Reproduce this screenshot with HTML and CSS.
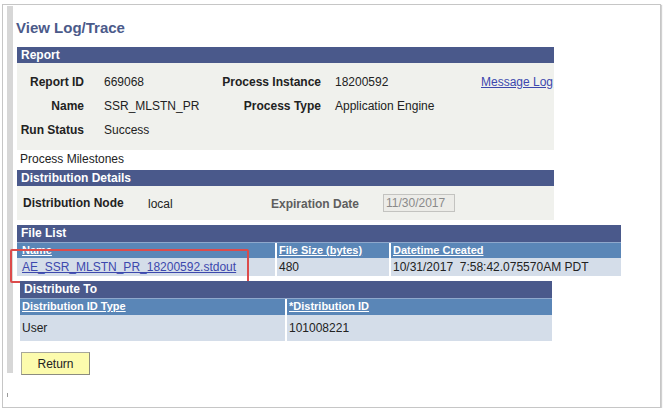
FILE: index.html
```html
<!DOCTYPE html>
<html>
<head>
<meta charset="utf-8">
<link rel="stylesheet" href="styles.css">
</head>
<body>
<div class="frame">
  <div class="rail">
    <div class="rail-bar"></div>
    <div class="rail-tick"></div>
  </div>
  <main class="page">
    <h1 class="title">View Log/Trace</h1>

    <section class="box report">
      <div class="bar">Report</div>
      <div class="report-body">
        <span class="lbl">Report ID</span><span class="val">669068</span>
        <span class="lbl">Process Instance</span><span class="val2">18200592</span>
        <a class="link msg" href="#">Message Log</a>

        <span class="lbl">Name</span><span class="val">SSR_MLSTN_PR</span>
        <span class="lbl">Process Type</span><span class="val2">Application Engine</span>
        <span></span>

        <span class="lbl">Run Status</span><span class="val">Success</span>
        <span></span><span></span><span></span>
      </div>
    </section>

    <div class="milestones">Process Milestones</div>

    <section class="box dist">
      <div class="bar">Distribution Details</div>
      <div class="dist-body">
        <span class="dlbl node">Distribution Node</span>
        <span class="dval">local</span>
        <span class="dlbl exp">Expiration Date</span>
        <span class="date-input">11/30/2017</span>
      </div>
    </section>

    <section class="grid-box files">
      <div class="bar tbar">File List</div>
      <div class="row head">
        <a class="cell c-name" href="#">Name</a>
        <a class="cell c-size" href="#">File Size (bytes)</a>
        <a class="cell c-date" href="#">Datetime Created</a>
      </div>
      <div class="row data">
        <span class="cell c-name"><a class="link" href="#">AE_SSR_MLSTN_PR_18200592.stdout</a></span>
        <span class="cell c-size">480</span>
        <span class="cell c-date">10/31/2017&nbsp; 7:58:42.075570AM PDT</span>
      </div>
      <div class="highlight"></div>
    </section>

    <section class="grid-box dest">
      <div class="bar tbar">Distribute To</div>
      <div class="row head">
        <a class="cell d-type" href="#">Distribution ID Type</a>
        <a class="cell d-id" href="#">*Distribution ID</a>
      </div>
      <div class="row data tall">
        <span class="cell d-type">User</span>
        <span class="cell d-id">101008221</span>
      </div>
    </section>

    <button class="return" type="button">Return</button>
  </main>
</div>
</body>
</html>
```

FILE: styles.css
```css
* { box-sizing: border-box; }

html, body {
  margin: 0;
  padding: 0;
  background: #ffffff;
}

body {
  font-family: "Liberation Sans", Arial, sans-serif;
  font-size: 12px;
  color: #222222;
}

.frame {
  margin: 4px 0 0 2px;
  width: 659px;
  height: 404px;
  border: 1px solid #c6c6c6;
  box-shadow: 1px 1px 1px rgba(0, 0, 0, 0.18);
  display: flex;
  align-items: flex-start;
  background: #ffffff;
}

.rail {
  margin-left: 4px;
  margin-top: 1px;
  width: 6px;
  display: flex;
  flex-direction: column;
  align-items: flex-start;
}

.rail-bar {
  width: 6px;
  height: 367px;
  background: #d7d7d7;
}

.rail-tick {
  width: 1px;
  height: 4px;
  margin-top: 20px;
  background: #9a9a9a;
}

.page {
  margin-left: 4px;
  position: relative;
  display: flex;
  flex-direction: column;
  align-items: flex-start;
}

.title {
  margin: 14px 0 0 -1px;
  font-size: 15px;
  line-height: 18px;
  font-weight: bold;
  color: #4b5a8a;
}

.box {
  width: 537px;
}

.bar {
  height: 16px;
  line-height: 16px;
  background: #4a598b;
  color: #ffffff;
  font-weight: bold;
  font-size: 12px;
  padding-left: 4px;
}

.bar.tbar {
  height: 17px;
  line-height: 17px;
}

.report {
  margin-top: 10px;
}

.report-body {
  background: #f0f1ed;
  padding: 7px 0 8px 0;
  display: grid;
  grid-template-columns: 67px 138px 99px 160px 73px;
  grid-auto-rows: 24px;
  align-items: center;
}

.lbl {
  font-weight: bold;
  text-align: right;
  color: #222222;
}

.val {
  padding-left: 20px;
}

.val2 {
  padding-left: 14px;
}

.link {
  color: #3c48ad;
  text-decoration: underline;
}

.msg {
  white-space: nowrap;
}

.milestones {
  margin-top: 2px;
  padding-left: 3px;
  line-height: 14px;
}

.dist {
  margin-top: 4px;
}

.dist-body {
  background: #f0f1ed;
  height: 34px;
  display: flex;
  align-items: center;
}

.dlbl {
  font-weight: bold;
}

.node {
  margin-left: 6px;
  width: 125px;
}

.dval {
  width: 123px;
  padding-top: 2px;
}

.exp {
  color: #5e5e5e;
  width: 112px;
  padding-top: 2px;
}

.date-input {
  width: 72px;
  height: 18px;
  line-height: 16px;
  border: 1px solid #c3c3c0;
  background: #ecece8;
  color: #8a8a8a;
  padding-left: 2px;
}

.grid-box {
  position: relative;
}

.files {
  margin-top: 5px;
  width: 604px;
}

.row {
  display: flex;
}

.row.head {
  background: #5a86b7;
  border-top: 1px solid #8fa8cc;
  height: 16px;
}

.dest .row.head {
  height: 17px;
}

.row.head .cell {
  color: #ffffff;
  font-weight: bold;
  font-size: 11px;
  text-decoration: underline;
  line-height: 15px;
}

.row.data {
  background: #d4dde9;
  height: 18px;
}

.row.data .cell {
  line-height: 18px;
}

.row.tall {
  height: 26px;
}

.row.tall .cell {
  line-height: 26px;
}

.cell {
  padding-left: 2px;
  display: block;
  border-right: 2px solid #ffffff;
  white-space: nowrap;
  overflow: hidden;
}

.cell:first-child {
  padding-left: 5px;
}

.cell:last-child {
  border-right: none;
}

.c-name { width: 260px; }
.c-size { width: 114px; }
.c-date { flex: 1; }

.highlight {
  position: absolute;
  left: -7px;
  top: 24px;
  width: 239px;
  height: 34px;
  border: 2px solid #dc4b4b;
  border-radius: 2px;
}

.dest {
  margin-top: 5px;
  margin-left: 3px;
  width: 532px;
}

.dest .cell:first-child {
  padding-left: 2px;
}

.d-type { width: 267px; }
.d-id { flex: 1; }

.return {
  margin-top: 11px;
  margin-left: 4px;
  width: 69px;
  height: 23px;
  background: #fcfbad;
  border: 1px solid #a7a79a;
  border-right-color: #8c8c80;
  border-bottom-color: #8c8c80;
  font-family: "Liberation Sans", Arial, sans-serif;
  font-size: 12px;
  color: #222222;
  padding: 0;
}
```
